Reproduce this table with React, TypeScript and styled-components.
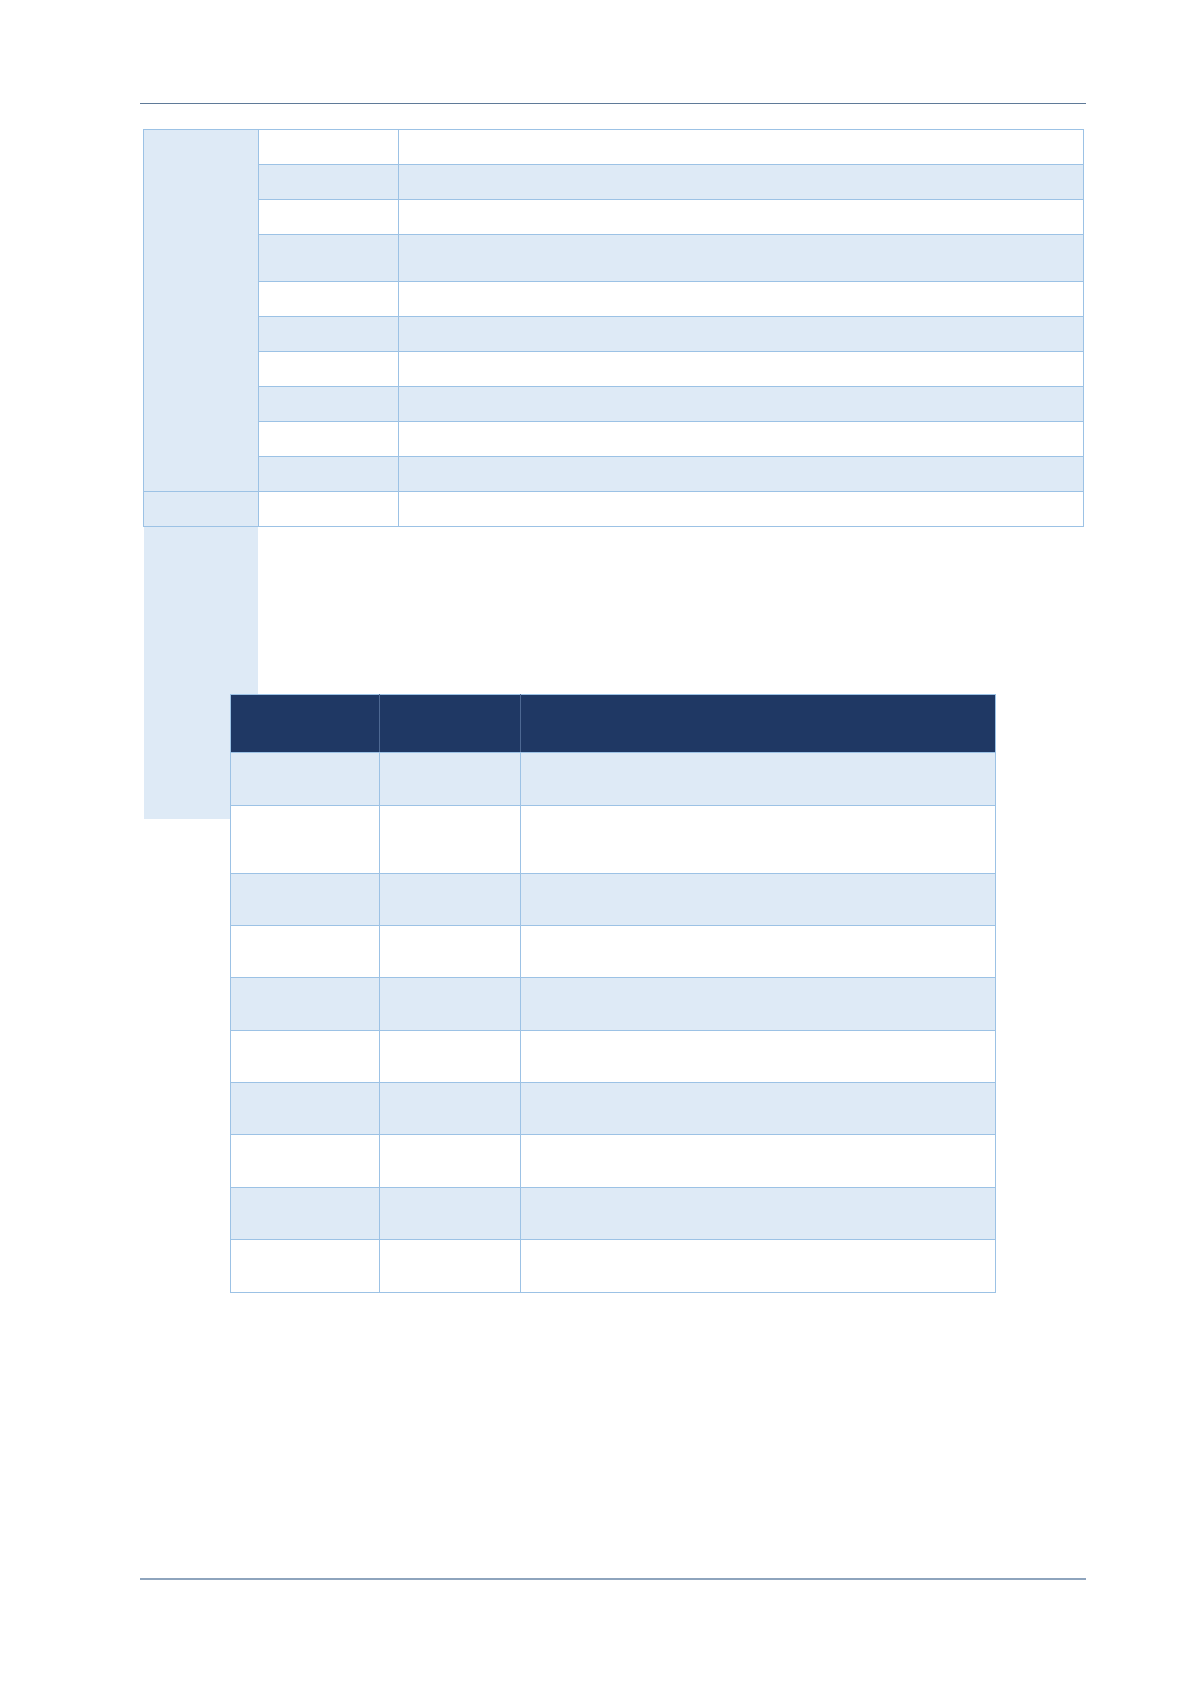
import styled, { createGlobalStyle } from "styled-components";

const GlobalStyle = createGlobalStyle`
  html, body {
    margin: 0;
    padding: 0;
    background: #ffffff;
    font-family: "Liberation Sans", Arial, sans-serif;
  }
`

const Page = styled.div`
  width: 1196px;
  min-height: 1692px;
  display: flex;
  flex-direction: column;
  box-sizing: border-box;
  padding-top: 103px;
`

const Rule = styled.div<{ $thick?: boolean; $color: string }>`
  margin-left: 140px;
  width: 946px;
  height: ${(p) => (p.$thick ? "2px" : "1px")};
  background: ${(p) => p.$color};
`

const Table = styled.table<{ $left: number; $width: number; $top: number }>`
  border-collapse: collapse;
  table-layout: fixed;
  width: ${(p) => p.$width}px;
  margin-left: ${(p) => p.$left}px;
  margin-top: ${(p) => p.$top}px;
  position: relative;
  z-index: 1;
`

const Row = styled.tr<{ $h: number }>`
  height: ${(p) => p.$h}px;
`

const Cell = styled.td<{ $shade?: boolean }>`
  border: 1px solid #9cc2e5;
  padding: 0;
  background: ${(p) => (p.$shade ? "#deeaf6" : "#ffffff")};
  font-size: 14px;
  color: #000;
`

const Head = styled.th`
  border: 1px solid #4d6892;
  border-top-color: #9cc2e5;
  border-bottom-color: #9cc2e5;
  padding: 0;
  background: #1f3864;
  &:first-child { border-left-color: #9cc2e5; }
  &:last-child { border-right-color: #9cc2e5; }
`

const Overlap = styled.div`
  display: grid;
  grid-template-columns: 1fr;
  grid-template-rows: auto;
`

const ShadeBlock = styled.div`
  grid-area: 1 / 1;
  margin-left: 144px;
  width: 114px;
  height: 292px;
  background: #deeaf6;
`

const Layer = styled.div`
  grid-area: 1 / 1;
  display: flex;
  flex-direction: column;
`

const Spacer = styled.div<{ $h: number }>`
  height: ${(p) => p.$h}px;
`

const firstRows = [35, 35, 35, 46.5, 35, 35, 35, 35, 35, 35]
const secondRows = [53, 68, 52.4, 52.4, 52.4, 52.4, 52.4, 52.4, 52.4, 52.4]

export default function App() {
  return (
    <Page>
      <GlobalStyle />
      <Rule $color="#5f7a98" />

      <Table $left={143} $width={941} $top={25}>
        <colgroup>
          <col style={{ width: 115 }} />
          <col style={{ width: 140 }} />
          <col />
        </colgroup>
        <tbody>
          {firstRows.map((h, i) => (
            <Row key={i} $h={h}>
              {i === 0 && <Cell $shade rowSpan={firstRows.length} />}
              <Cell $shade={i % 2 === 1} />
              <Cell $shade={i % 2 === 1} />
            </Row>
          ))}
          <Row $h={35}>
            <Cell $shade />
            <Cell />
            <Cell />
          </Row>
        </tbody>
      </Table>

      <Overlap>
        <ShadeBlock />
        <Layer>
          <Table $left={230} $width={766} $top={167}>
            <colgroup>
              <col style={{ width: 149 }} />
              <col style={{ width: 141 }} />
              <col />
            </colgroup>
            <thead>
              <Row $h={58}>
                <Head />
                <Head />
                <Head />
              </Row>
            </thead>
            <tbody>
              {secondRows.map((h, i) => (
                <Row key={i} $h={h}>
                  <Cell $shade={i % 2 === 0} />
                  <Cell $shade={i % 2 === 0} />
                  <Cell $shade={i % 2 === 0} />
                </Row>
              ))}
            </tbody>
          </Table>
        </Layer>
      </Overlap>

      <Spacer $h={285} />
      <Rule $thick $color="#8ea4bd" />
    </Page>
  )
}
